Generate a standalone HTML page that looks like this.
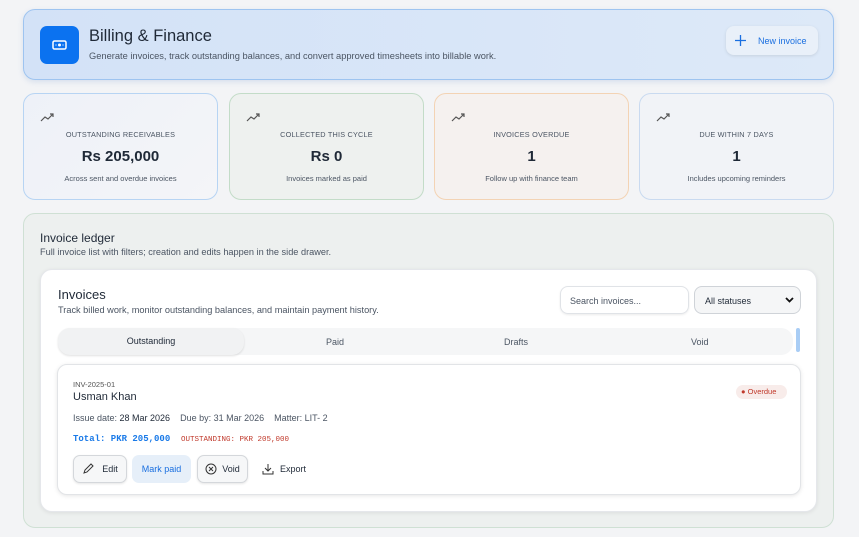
<!DOCTYPE html>
<html><head><meta charset="utf-8"><style>
*{box-sizing:border-box;margin:0;padding:0}
body{width:859px;height:537px;background:#f3f4f6;font-family:"Liberation Sans",sans-serif;color:#1f2937;position:relative;overflow:hidden}
.abs{position:absolute}
.hdr{left:23px;top:9px;width:811px;height:71px;border:1px solid #9ec4f0;border-radius:12px;background:linear-gradient(90deg,#d3e2f7,#dde9f8);box-shadow:0 2px 6px rgba(100,140,200,.2)}
.ico{left:16px;top:16px;width:39px;height:38px;background:#0b72f0;border-radius:7px}
.card{top:93px;height:107px;width:195px;border-radius:12px;text-align:center}
.card .t{position:absolute;top:36px;width:100%;font-size:7.3px;letter-spacing:.2px;color:#4b5563}
.card .v{position:absolute;top:54px;width:100%;font-size:15px;font-weight:bold;color:#1f2937}
.card .s{position:absolute;top:80px;width:100%;font-size:7.5px;color:#4b5563}
.card svg{position:absolute;left:16px;top:19px}
.btn{position:absolute;top:90px;height:28px;border-radius:7px;font-size:9px;display:flex;align-items:center;justify-content:center;gap:8px}
</style></head><body>
<div class="abs hdr">
 <div class="abs ico"><svg width="39" height="38"><rect x="13" y="15" width="13" height="8" rx="1.5" fill="none" stroke="#fff" stroke-width="1.5"/><circle cx="19.5" cy="19" r="1.5" fill="#fff"/><circle cx="16" cy="19" r=".6" fill="#fff"/><circle cx="23" cy="19" r=".6" fill="#fff"/></svg></div>
 <div class="abs" style="left:65px;top:17px;font-size:16.5px;color:#1f2937">Billing &amp; Finance</div>
 <div class="abs" style="left:65px;top:41px;font-size:9.3px;color:#4b5563">Generate invoices, track outstanding balances, and convert approved timesheets into billable work.</div>
 <div class="abs" style="left:702px;top:16px;width:92px;height:29px;background:#e9f0f9;border-radius:8px;box-shadow:0 1px 3px rgba(0,0,0,.1);color:#1a6fe0;font-size:9px"><svg class="abs" style="left:9px;top:9px" width="11" height="11"><path d="M5.5 0v11M0 5.5h11" stroke="#1a6fe0" stroke-width="1.3"/></svg><span class="abs" style="left:32px;top:10px">New invoice</span></div>
</div>
<div class="abs card" style="left:23px;border:1px solid #b7d4f3;background:linear-gradient(135deg,#eef1f8,#f4f5f8)"><svg width="14" height="10"><path d="M1 8l4-4 3 2 5-5M10 1h3v3" fill="none" stroke="#555" stroke-width="1.2"/></svg><div class="t">OUTSTANDING RECEIVABLES</div><div class="v">Rs 205,000</div><div class="s">Across sent and overdue invoices</div></div>
<div class="abs card" style="left:229px;border:1px solid #c3dcc8;background:#eef1ef"><svg width="14" height="10"><path d="M1 8l4-4 3 2 5-5M10 1h3v3" fill="none" stroke="#555" stroke-width="1.2"/></svg><div class="t">COLLECTED THIS CYCLE</div><div class="v">Rs 0</div><div class="s">Invoices marked as paid</div></div>
<div class="abs card" style="left:434px;border:1px solid #f3d3b4;background:#f5f1ef"><svg width="14" height="10"><path d="M1 8l4-4 3 2 5-5M10 1h3v3" fill="none" stroke="#555" stroke-width="1.2"/></svg><div class="t">INVOICES OVERDUE</div><div class="v">1</div><div class="s">Follow up with finance team</div></div>
<div class="abs card" style="left:639px;border:1px solid #c9daf0;background:#f1f3f7"><svg width="14" height="10"><path d="M1 8l4-4 3 2 5-5M10 1h3v3" fill="none" stroke="#555" stroke-width="1.2"/></svg><div class="t">DUE WITHIN 7 DAYS</div><div class="v">1</div><div class="s">Includes upcoming reminders</div></div>

<div class="abs" style="left:23px;top:213px;width:811px;height:315px;border:1px solid #cfe0d4;border-radius:12px;background:#edf0ef">
 <div class="abs" style="left:16px;top:17px;font-size:12px;color:#1f2937">Invoice ledger</div>
 <div class="abs" style="left:16px;top:33px;font-size:9.2px;color:#4b5563">Full invoice list with filters; creation and edits happen in the side drawer.</div>
 <div class="abs" style="left:16px;top:55px;width:777px;height:243px;background:#fff;border-radius:12px;box-shadow:0 1px 4px rgba(0,0,0,.08);border:1px solid #e5e7eb">
  <div class="abs" style="left:17px;top:17px;font-size:13px">Invoices</div>
  <div class="abs" style="left:17px;top:35px;font-size:9.2px;color:#4b5563">Track billed work, monitor outstanding balances, and maintain payment history.</div>
  <div class="abs" style="left:519px;top:16px;width:129px;height:28px;border:1px solid #e0e3e7;border-radius:8px;box-shadow:0 1px 2px rgba(0,0,0,.08);font-size:9px;color:#4b5563;padding:9px 9px">Search invoices...</div>
  <div class="abs" style="left:653px;top:16px;width:107px;height:28px;border:1px solid #cfd3d8;border-radius:8px;background:#f5f6f7;font-size:9px;color:#1f2937;padding:9px 10px">All statuses<svg class="abs" style="right:6px;top:10px" width="9" height="6"><path d="M1 1l3.5 3.5L8 1" fill="none" stroke="#111" stroke-width="1.8"/></svg></div>
  <div class="abs" style="left:17px;top:58px;width:735px;height:27px;background:#f5f6f7;border-radius:12px;font-size:9px;color:#4b5563">
   <div class="abs" style="left:0;top:0;width:186px;height:27px;background:#f1f2f3;border-radius:12px;box-shadow:0 1px 2px rgba(0,0,0,.12);text-align:center;line-height:27px;color:#1f2937">Outstanding</div>
   <div class="abs" style="left:268px;top:9px">Paid</div>
   <div class="abs" style="left:446px;top:9px">Drafts</div>
   <div class="abs" style="left:633px;top:9px">Void</div>
  </div>
  <div class="abs" style="left:755px;top:58px;width:4px;height:24px;background:#a9cdf5;border-radius:2px"></div>
  <div class="abs" style="left:16px;top:94px;width:744px;height:131px;border:1px solid #e2e4e7;border-radius:10px;background:#fff;box-shadow:0 1px 4px rgba(0,0,0,.1)">
   <div class="abs" style="left:15px;top:15px;font-size:7.5px;color:#555">INV-2025-01</div>
   <div class="abs" style="left:15px;top:26px;font-size:11px;color:#1f2937">Usman Khan</div>
   <div class="abs" style="left:678px;top:20px;width:51px;height:14px;background:#f8ecea;border-radius:7px;font-size:7.5px;color:#c0392b;line-height:14px;padding-left:5px">&#9679; Overdue</div>
   <div class="abs" style="left:15px;top:48px;font-size:9px;color:#4b5563">Issue date: <span style="color:#1f2937">28 Mar 2026</span>&nbsp;&nbsp;&nbsp; Due by: 31 Mar 2026 &nbsp;&nbsp; Matter: LIT- 2</div>
   <div class="abs" style="left:15px;top:69px;font-family:'Liberation Mono',monospace;font-size:9px;font-weight:bold;color:#1a7ae8">Total: PKR 205,000</div>
   <div class="abs" style="left:123px;top:71px;font-family:'Liberation Mono',monospace;font-size:7.5px;color:#c0392b">OUTSTANDING: PKR 205,000</div>
   <div class="btn" style="left:15px;width:54px;border:1px solid #d4d7db;background:#f6f7f8;box-shadow:0 1px 2px rgba(0,0,0,.1)"><svg width="12" height="12"><path d="M2 10l1-3 6-6 2 2-6 6z" fill="none" stroke="#333" stroke-width="1"/></svg>Edit</div>
   <div class="btn" style="left:74px;width:59px;background:#e6eff9;color:#1a6fe0">Mark paid</div>
   <div class="btn" style="left:139px;width:51px;border:1px solid #d4d7db;background:#f6f7f8;box-shadow:0 1px 2px rgba(0,0,0,.1);gap:5px"><svg width="12" height="12"><circle cx="6" cy="6" r="5" fill="none" stroke="#333"/><path d="M4 4l4 4M8 4l-4 4" stroke="#333"/></svg>Void</div>
   <div class="btn" style="left:198px;width:56px;gap:6px"><svg width="12" height="12"><path d="M6 1v7M3 5l3 3 3-3M1 8v3h10V8" fill="none" stroke="#333"/></svg>Export</div>
  </div>
 </div>
</div>
</body></html>
